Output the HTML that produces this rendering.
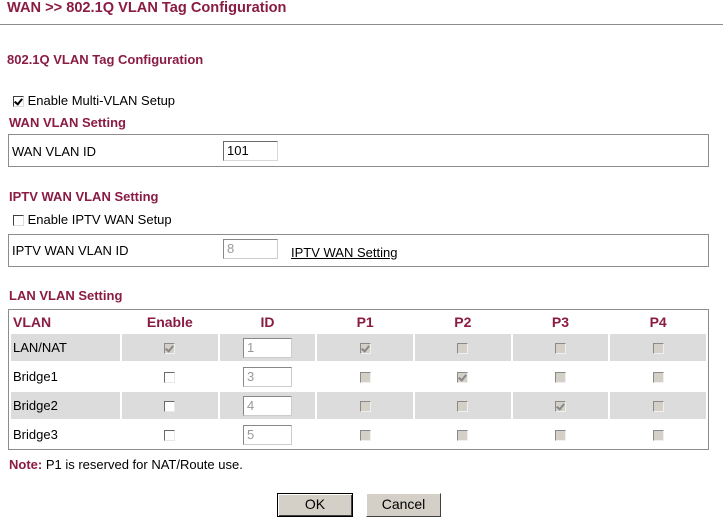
<!DOCTYPE html>
<html><head><meta charset="utf-8"><style>
*{margin:0;padding:0;box-sizing:border-box}
body{width:723px;height:529px;background:#fff;font-family:"Liberation Sans",Arial,sans-serif;font-size:13px;color:#000;position:relative;overflow:hidden}
.a{position:absolute;white-space:nowrap}
.h{color:#8a1c44;font-weight:bold}
.cb{display:inline-block;width:11px;height:11px;border:1px solid;border-color:#6a6a6a #e8e8e8 #e8e8e8 #6a6a6a;background:#fff;position:relative;vertical-align:middle}
.cb.d{background:#d4d0c8;border-color:#8a8a8a #f0f0f0 #f0f0f0 #8a8a8a}
.cb.k::after{content:"";position:absolute;left:2px;top:0px;width:3px;height:6px;border:solid #000;border-width:0 2px 2px 0;transform:rotate(40deg)}
.cb.d.k::after{border-color:#888}
.box{position:absolute;left:8px;width:701px;border:1px solid #8c8c8c}
.in{position:absolute;height:20px;border:1px solid;border-color:#6a6a6a #d8d8d8 #d8d8d8 #6a6a6a;background:#fff;font-size:13px;padding:2px 3px;line-height:14px}
.in.d{color:#999;border-color:#888 #ccc #ccc #888}
table{position:absolute;left:9px;top:310px;border-collapse:separate;border-spacing:2px 2px;table-layout:fixed;width:699px}
td{height:27px;font-size:13px;text-align:center;vertical-align:middle}
td:first-child{text-align:left;padding-left:2px}
tr.g td{background:#dcdcdc}
tr.hd td{height:20px;color:#8a1c44;font-weight:bold;font-size:14px}
.ti{display:inline-block;width:49px;height:20px;border:1px solid;border-color:#888 #ccc #ccc #888;background:#fff;color:#999;text-align:left;padding:2px 3px;line-height:14px;vertical-align:middle}
.btn{position:absolute;top:493px;height:24px;background:#d4d0c8;border:1px solid;border-color:#fff #404040 #404040 #fff;font-size:14px;text-align:center;line-height:21px}
</style></head><body>
<div class="a h" style="left:7px;top:0px;font-size:14.6px">WAN &gt;&gt; 802.1Q VLAN Tag Configuration</div>
<div class="a" style="left:0;top:24px;width:723px;height:1px;background:#8c8c8c"></div>
<div class="a h" style="left:7px;top:52px;font-size:13px">802.1Q VLAN Tag Configuration</div>
<div class="a" style="left:13px;top:93px"><span class="cb k" style="border-color:#404040 #ddd #ddd #404040"></span> Enable Multi-VLAN Setup</div>
<div class="a h" style="left:9px;top:115px;font-size:13px">WAN VLAN Setting</div>
<div class="box" style="top:134px;height:33px"></div>
<div class="a" style="left:12px;top:144px">WAN VLAN ID</div>
<div class="in" style="left:223px;top:141px;width:55px">101</div>
<div class="a h" style="left:9px;top:189px;font-size:13px">IPTV WAN VLAN Setting</div>
<div class="a" style="left:13px;top:212px"><span class="cb" style="border-color:#404040 #ddd #ddd #404040"></span> Enable IPTV WAN Setup</div>
<div class="box" style="top:234px;height:33px"></div>
<div class="a" style="left:12px;top:243px">IPTV WAN VLAN ID</div>
<div class="in d" style="left:223px;top:239px;width:55px">8</div>
<div class="a" style="left:291px;top:245px;text-decoration:underline">IPTV WAN Setting</div>
<div class="a h" style="left:9px;top:288px;font-size:13px">LAN VLAN Setting</div>
<div class="box" style="top:309px;height:141px"></div>
<table>
<colgroup><col style="width:109px"><col><col><col><col><col><col></colgroup>
<tr class="hd"><td>VLAN</td><td>Enable</td><td>ID</td><td>P1</td><td>P2</td><td>P3</td><td>P4</td></tr>
<tr class="g"><td>LAN/NAT</td><td><span class="cb d k"></span></td><td><span class="ti">1</span></td><td><span class="cb d k"></span></td><td><span class="cb d"></span></td><td><span class="cb d"></span></td><td><span class="cb d"></span></td></tr>
<tr><td>Bridge1</td><td><span class="cb"></span></td><td><span class="ti">3</span></td><td><span class="cb d"></span></td><td><span class="cb d k"></span></td><td><span class="cb d"></span></td><td><span class="cb d"></span></td></tr>
<tr class="g"><td>Bridge2</td><td><span class="cb"></span></td><td><span class="ti">4</span></td><td><span class="cb d"></span></td><td><span class="cb d"></span></td><td><span class="cb d k"></span></td><td><span class="cb d"></span></td></tr>
<tr><td>Bridge3</td><td><span class="cb"></span></td><td><span class="ti">5</span></td><td><span class="cb d"></span></td><td><span class="cb d"></span></td><td><span class="cb d"></span></td><td><span class="cb d"></span></td></tr>
</table>
<div class="a" style="left:9px;top:457px"><span class="h">Note:</span> P1 is reserved for NAT/Route use.</div>
<div class="btn" style="left:277px;width:76px;border:1px solid #000;box-shadow:inset 1px 1px 0 #fff,inset -1px -1px 0 #404040">OK</div>
<div class="btn" style="left:366px;width:75px">Cancel</div>
</body></html>
